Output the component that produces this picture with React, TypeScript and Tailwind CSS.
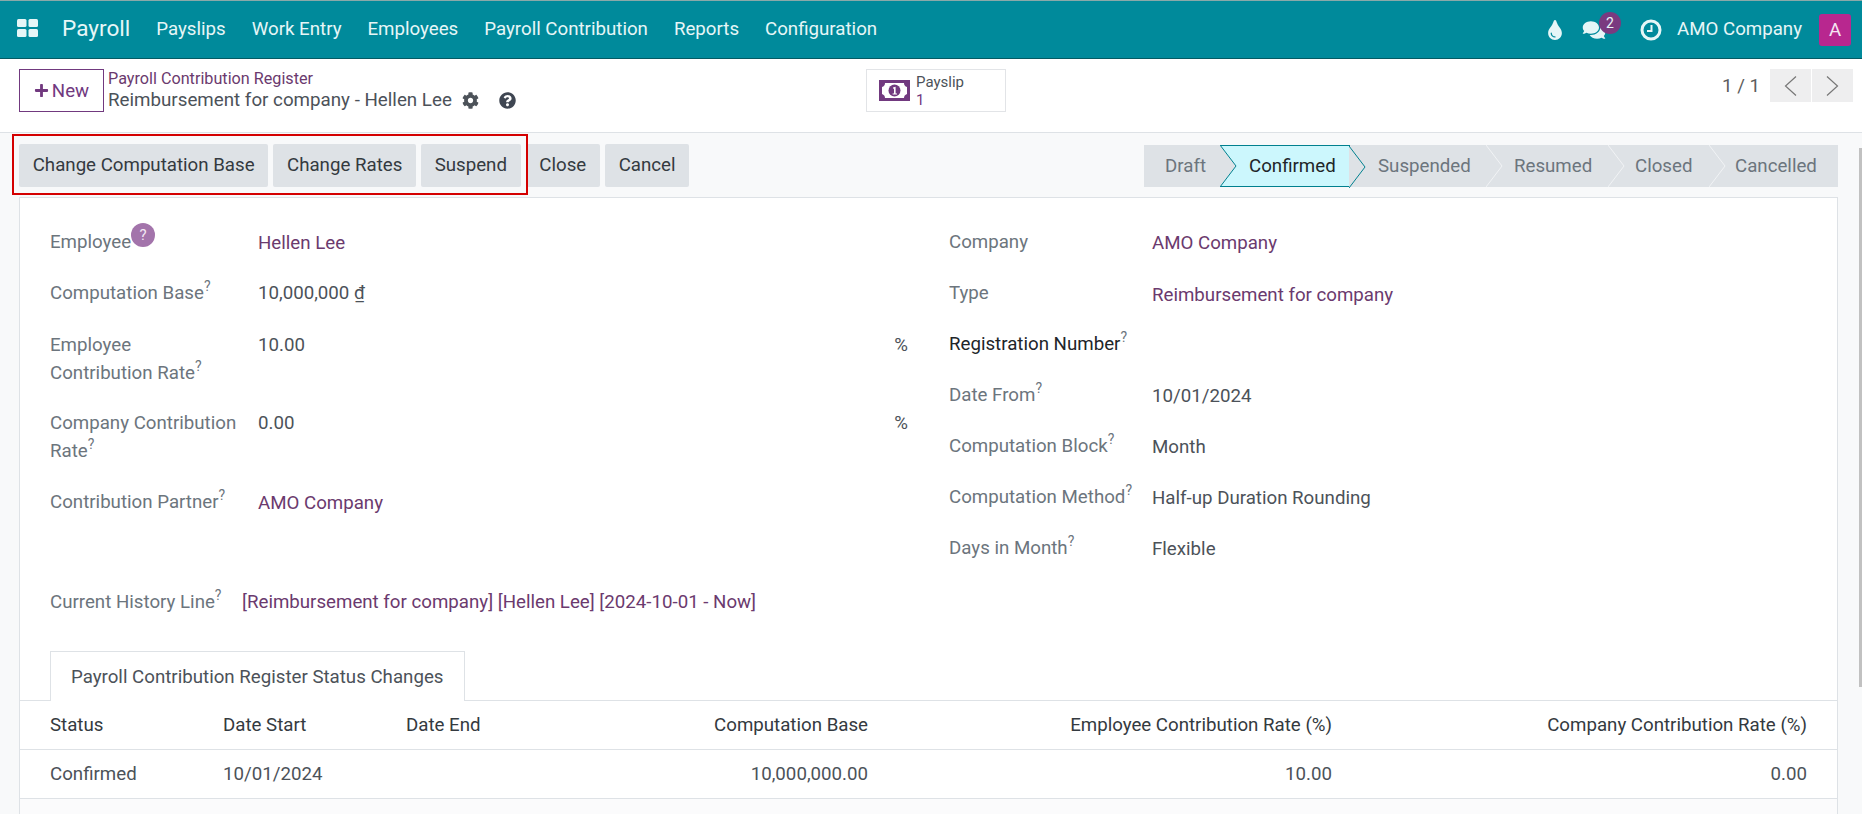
import { FaCog, FaComments, FaPlus, FaQuestionCircle, FaTint } from "react-icons/fa";

const navItems = ["Payslips", "Work Entry", "Employees", "Payroll Contribution", "Reports", "Configuration"];
const actions = ["Change Computation Base", "Change Rates", "Suspend", "Close", "Cancel"];

const stages = [
  { name: "Draft", width: "w-[76px]", pad: "pl-[21px]", teal: true },
  { name: "Confirmed", width: "w-[130px]", pad: "pl-[29px]", current: true, teal: true },
  { name: "Suspended", width: "w-[136px]", pad: "pl-[28px]" },
  { name: "Resumed", width: "w-[122px]", pad: "pl-[28px]" },
  { name: "Closed", width: "w-[101px]", pad: "pl-[27px]" },
  { name: "Cancelled", width: "w-[129px]", pad: "pl-[26px]" },
];

const rightFields = [
  { label: "Company", value: "AMO Company", link: true },
  { label: "Type", value: "Reimbursement for company", link: true, low: true },
  { label: "Registration Number", value: "", help: true, strong: true },
  { label: "Date From", value: "10/01/2024", help: true },
  { label: "Computation Block", value: "Month", help: true },
  { label: "Computation Method", value: "Half-up Duration Rounding", help: true },
  { label: "Days in Month", value: "Flexible", help: true },
];

const Help = () => <sup className="relative -top-[8px] align-baseline text-[14px] text-[#6c757d]">?</sup>;

// status arrow drawn over the right edge of each stage
const StageArrow = ({ teal }: { teal?: boolean }) => (
  <svg className="absolute top-0 left-full z-10 h-[42px] w-[17px]" viewBox="0 0 17 42" fill="none">
    <path d="M0 0 L16 21 L0 42 Z" fill="#dee2e6" />
    <path d="M0 0 L16 21 L0 42" stroke={teal ? "#01808f" : "#f1f3f5"} strokeWidth="1" />
  </svg>
);

const MoneyIcon = () => (
  <svg className="h-[21px] w-[31px]" viewBox="0 0 31 21">
    <rect width="31" height="21" fill="#71397f" />
    <path d="M6 3 H25 Q25 6 28 7 V14 Q25 15 25 18 H6 Q6 15 3 14 V7 Q6 6 6 3 Z" fill="#fff" />
    <circle cx="15.5" cy="10.5" r="6" fill="#71397f" />
    <path d="M14 7.5 L16.6 6.8 V13.4 H18 V14.6 H13.6 V13.4 H15 V8.6 L14 8.8 Z" fill="#fff" />
  </svg>
);

const Chevron = ({ left }: { left?: boolean }) => (
  <svg className="h-[20px] w-[13px]" viewBox="0 0 13 20" fill="none" stroke="#777" strokeWidth="1.2">
    <path d={left ? "M12 0.5 L1.5 10 L12 19.5" : "M1 0.5 L11.5 10 L1 19.5"} />
  </svg>
);

const Link = ({ children }: { children: React.ReactNode }) => <span className="mt-[1px] text-[#6b3a6e]">{children}</span>;

export default function App() {
  return (
    <div className="relative flex h-[814px] w-[1862px] flex-col overflow-hidden bg-[#f8f9fa] font-['Roboto',sans-serif] text-[18.7px] leading-[28px] text-[#4c5259]">
      {/* Navbar */}
      <header className="flex h-[59px] shrink-0 items-center border-t border-b border-t-[#8aa9a9] border-b-[#045a63] bg-[#008a9b] pl-[17px] pr-[11px] text-[#e6f6f7]">
        <svg className="-mt-[4px] h-[18px] w-[21px]" viewBox="0 0 21 18" fill="#e6f6f7">
          <rect x="0" y="0" width="9.5" height="8" rx="1.5" />
          <rect x="11.5" y="0" width="9.5" height="8" rx="1.5" />
          <rect x="0" y="10" width="9.5" height="8" rx="1.5" />
          <rect x="11.5" y="10" width="9.5" height="8" rx="1.5" />
        </svg>
        <span className="-mt-[2px] ml-[24px] text-[22.6px]">Payroll</span>
        <nav className="-mt-[2px] ml-[26px] flex gap-[26px]">
          {navItems.map((item) => (
            <span key={item}>{item}</span>
          ))}
        </nav>
        <div className="ml-auto flex items-center">
          <FaTint className="h-[20px] w-[14px]" />
          <div className="relative ml-[20px]">
            <FaComments className="h-[20px] w-[24px]" />
            <span className="absolute -right-[15px] -top-[8px] flex h-[22px] w-[22px] items-center justify-center rounded-full bg-[#7a3a80] text-[14px] text-[#e6f6f7]">2</span>
          </div>
          <svg className="ml-[34px] h-[22px] w-[22px]" viewBox="0 0 22 22" fill="none" stroke="#e6f6f7">
            <circle cx="11" cy="11" r="9" strokeWidth="3" />
            <path d="M11.5 6 V12 H7" strokeWidth="2" />
          </svg>
          <span className="-mt-[2px] ml-[15px]">AMO Company</span>
          <span className="ml-[17px] flex h-[32px] w-[32px] items-center justify-center rounded-[3px] bg-[#b8278f] text-[#f5e6f2]">A</span>
        </div>
      </header>

      {/* Control panel */}
      <div className="relative flex h-[74px] shrink-0 items-start border-b border-[#dee2e6] bg-white pl-[19px] pr-[9px] pt-[10px]">
        <button className="flex h-[43px] w-[85px] items-center justify-center gap-[3px] border border-[#71397f] text-[#71397f]">
          <FaPlus className="h-[15px] w-[15px]" /> New
        </button>
        <div className="-mt-[2px] ml-[4px]">
          <div className="text-[16.2px] leading-[23px] text-[#6b3a6e]">Payroll Contribution Register</div>
          <div className="-mt-[1px] flex items-center text-[18.75px] leading-[22px] text-[#4c5259]">
            Reimbursement for company - Hellen Lee
            <FaCog className="ml-[10px] h-[17px] w-[17px]" />
            <FaQuestionCircle className="ml-[20px] h-[17px] w-[17px] text-[#3f4652]" />
          </div>
        </div>
        <div className="absolute left-[866px] top-[10px] flex h-[43px] w-[140px] items-center border border-[#e2e4e7] pl-[12px] text-[15px] leading-[18px]">
          <MoneyIcon />
          <div className="ml-[6px]">
            <div>Payslip</div>
            <div className="text-[#71397f]">1</div>
          </div>
        </div>
        <div className="ml-auto flex items-center">
          <span className="mr-[10px] text-[#5d5d5d]">1 / 1</span>
          <div className="flex gap-[1px]">
            <span className="flex h-[33px] w-[41px] items-center justify-center bg-[#eeeeef]"><Chevron left /></span>
            <span className="flex h-[33px] w-[41px] items-center justify-center bg-[#eeeeef]"><Chevron /></span>
          </div>
        </div>
      </div>

      {/* Status bar */}
      <div className="flex h-[64px] shrink-0 items-start justify-between pl-[19px] pr-[24px] pt-[11px]">
        <div className="flex gap-[5px]">
          {actions.map((a) => (
            <button key={a} className="h-[43px] rounded-[2px] bg-[#dee2e6] px-[13.7px] pb-[2px] text-[#343a40]">{a}</button>
          ))}
        </div>
        <div className="mt-[1px] flex h-[42px] bg-[#dee2e6]">
          {stages.map((s, i) => (
            <div
              key={s.name}
              className={`relative flex items-center ${s.width} ${s.pad} ${s.current ? "border-y border-r border-[#01808f] bg-[#ccf7fd] text-[#212529]" : "text-[#6c757d]"}`}
            >
              {s.name}
              {i < stages.length - 1 && <StageArrow teal={s.teal} />}
            </div>
          ))}
        </div>
      </div>

      {/* Sheet */}
      <div className="ml-[19px] mr-[24px] flex flex-1 flex-col border-x border-t border-[#dee2e6] bg-white">
        <div className="px-[30px] pt-[30px]">
          <div className="flex">
            {/* left group */}
            <div className="w-[858px] shrink-0">
              <div className="mb-[22px] flex">
                <div className="w-[208px] text-[#6c757d]">
                  Employee
                  <span className="relative -top-[8px] inline-flex h-[24px] w-[24px] items-center justify-center rounded-full bg-[#a374ab] align-middle text-[15px] text-[#f3e8f3]">?</span>
                </div>
                <Link>Hellen Lee</Link>
              </div>
              <div className="mb-[24px] flex">
                <div className="w-[208px] text-[#6c757d]">Computation Base<Help /></div>
                <span>10,000,000 ₫</span>
              </div>
              <div className="mb-[22px] flex">
                <div className="w-[208px] text-[#6c757d]">Employee<br />Contribution Rate<Help /></div>
                <span className="flex-1">10.00</span>
                <span>%</span>
              </div>
              <div className="mb-[23px] flex">
                <div className="w-[208px] text-[#6c757d]">Company Contribution<br />Rate<Help /></div>
                <span className="flex-1">0.00</span>
                <span>%</span>
              </div>
              <div className="flex">
                <div className="w-[208px] text-[#6c757d]">Contribution Partner<Help /></div>
                <Link>AMO Company</Link>
              </div>
            </div>
            {/* right group */}
            <div className="ml-[41px] flex-1">
              {rightFields.map((f) => (
                <div key={f.label} className="mb-[23px] flex h-[28px]">
                  <div className={`w-[203px] ${f.strong ? "text-[#212529]" : "text-[#6c757d]"}`}>{f.label}{f.help && <Help />}</div>
                  <span className={`${f.low ? "mt-[2px]" : "mt-[1px]"} ${f.link ? "text-[#6b3a6e]" : ""}`}>{f.value}</span>
                </div>
              ))}
            </div>
          </div>
          <div className="mt-[3px] flex">
            <div className="w-[192px] text-[#6c757d]">Current History Line<Help /></div>
            <span className="text-[#6b3a6e]">[Reimbursement for company] [Hellen Lee] [2024-10-01 - Now]</span>
          </div>
        </div>

        {/* Tabs */}
        <div className="mt-[35px] flex border-b border-[#dee2e6] pl-[30px]">
          <div className="-mb-[1px] flex h-[50px] w-[415px] items-center border-x border-t border-[#dee2e6] bg-white pl-[20px]">
            Payroll Contribution Register Status Changes
          </div>
        </div>
        <div className="grid h-[49px] grid-cols-[173px_183px_183px_279px_464px_475px] items-center border-b border-[#dee2e6] px-[30px] text-[#343a40]">
          <span>Status</span>
          <span>Date Start</span>
          <span>Date End</span>
          <span className="text-right">Computation Base</span>
          <span className="text-right">Employee Contribution Rate (%)</span>
          <span className="text-right">Company Contribution Rate (%)</span>
        </div>
        <div className="grid h-[49px] grid-cols-[173px_183px_183px_279px_464px_475px] items-center border-b border-[#dee2e6] px-[30px]">
          <span>Confirmed</span>
          <span>10/01/2024</span>
          <span />
          <span className="text-right">10,000,000.00</span>
          <span className="text-right">10.00</span>
          <span className="text-right">0.00</span>
        </div>
        <div className="flex-1 bg-[#fbfbfc]" />
      </div>

      {/* Highlight box around the buttons */}
      <div className="absolute left-[12px] top-[134px] h-[61px] w-[516px] border-2 border-[#d40000]" />
      {/* Scrollbar thumb */}
      <div className="absolute right-0 top-[148px] h-[539px] w-[3px] bg-[#c1c1c1]" />
    </div>
  );
}
